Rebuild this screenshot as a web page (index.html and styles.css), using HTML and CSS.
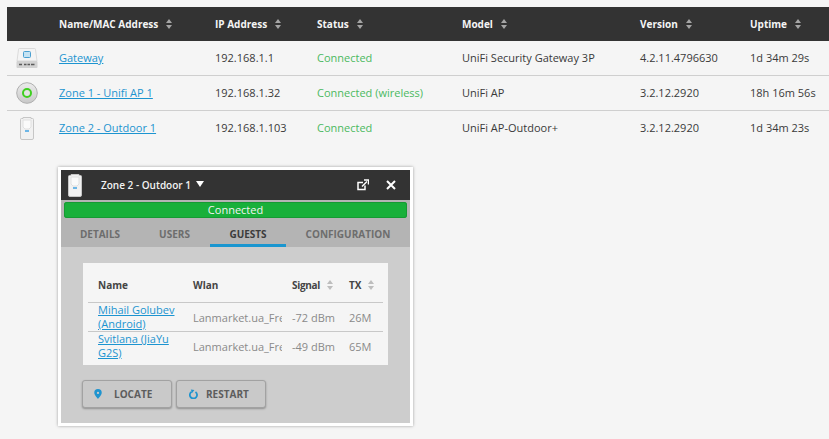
FILE: index.html
```html
<!DOCTYPE html>
<html lang="en">
<head>
<meta charset="utf-8">
<title>Devices</title>
<link rel="stylesheet" href="styles.css">
</head>
<body>
<svg class="defs" width="0" height="0" aria-hidden="true">
  <symbol id="sort" viewBox="0 0 6 10"><path d="M3 0L6 4H0zM3 10L0 6h6z"/></symbol>
  <symbol id="outdoor" viewBox="0 0 14 23">
    <path d="M3 .5h8v1h1.500a1 1 0 0 1 1 1V21a1.500 1.500 0 0 1-1.500 1.500H2A1.500 1.500 0 0 1 .5 21V2.500a1 1 0 0 1 1-1H3z" fill="#f1f1f1" stroke="#c6c6c6"/>
    <path d="M3 3h8v7L9 12H5L3 10z" fill="#fafafa" stroke="#e0e0e0"/>
    <rect x="5" y="13" width="4" height="2" fill="#6db6e6"/>
  </symbol>
</svg>
<main class="page">
  <table class="devices">
    <thead>
      <tr>
        <th class="c-icon"></th>
        <th class="c-name">Name/MAC Address<svg class="sort"><use href="#sort"/></svg></th>
        <th class="c-ip">IP Address<svg class="sort"><use href="#sort"/></svg></th>
        <th class="c-status">Status<svg class="sort"><use href="#sort"/></svg></th>
        <th class="c-model">Model<svg class="sort"><use href="#sort"/></svg></th>
        <th class="c-version">Version<svg class="sort"><use href="#sort"/></svg></th>
        <th class="c-uptime">Uptime<svg class="sort"><use href="#sort"/></svg></th>
      </tr>
    </thead>
    <tbody>
      <tr>
        <td class="icon-cell">
          <svg class="dev-icon" width="22" height="22" viewBox="0 0 22 22">
            <path d="M3.500 1.500h15a1 1 0 0 1 1 1L21 14H1L2.500 2.500a1 1 0 0 1 1-1z" fill="#f4f4f4" stroke="#d4d4d4" stroke-width=".8"/>
            <rect x="7.500" y="4.500" width="7" height="6" rx="1" fill="#c5e3f3" stroke="#4a9fd0"/>
            <rect x=".5" y="14" width="21" height="7" rx="1" fill="#d2d2d2"/>
            <path d="M3 17.500h3M8 17.500h2.500M11.500 17.500h2.500M15 17.500h3.500" stroke="#5a5a5a" stroke-width="1.400"/>
          </svg>
        </td>
        <td><a href="#">Gateway</a></td>
        <td>192.168.1.1</td>
        <td class="ok">Connected</td>
        <td>UniFi Security Gateway 3P</td>
        <td>4.2.11.4796630</td>
        <td>1d 34m 29s</td>
      </tr>
      <tr>
        <td class="icon-cell">
          <svg class="dev-icon" width="22" height="22" viewBox="0 0 22 22">
            <defs><linearGradient id="disc" x1="0" y1="0" x2="0" y2="1"><stop offset="0" stop-color="#ececec"/><stop offset="1" stop-color="#c8c8c8"/></linearGradient></defs>
            <circle cx="11" cy="11" r="10.300" fill="url(#disc)" stroke="#b0b0b0"/>
            <circle cx="11" cy="11" r="4" fill="#e4e4e4" stroke="#3fcf20" stroke-width="2"/>
          </svg>
        </td>
        <td><a href="#">Zone 1 - Unifi AP 1</a></td>
        <td>192.168.1.32</td>
        <td class="ok">Connected (wireless)</td>
        <td>UniFi AP</td>
        <td>3.2.12.2920</td>
        <td>18h 16m 56s</td>
      </tr>
      <tr>
        <td class="icon-cell"><svg class="dev-icon" width="14" height="23"><use href="#outdoor"/></svg></td>
        <td><a href="#">Zone 2 - Outdoor 1</a></td>
        <td>192.168.1.103</td>
        <td class="ok">Connected</td>
        <td>UniFi AP-Outdoor+</td>
        <td>3.2.12.2920</td>
        <td>1d 34m 23s</td>
      </tr>
    </tbody>
  </table>

  <section class="panel">
    <header class="panel-head">
      <svg class="panel-thumb" width="14" height="23"><use href="#outdoor"/></svg>
      <span class="panel-title">Zone 2 - Outdoor 1</span>
      <svg class="caret" width="8" height="6" viewBox="0 0 8 6"><path d="M0 0h8L4 6z" fill="#fff"/></svg>
      <svg class="popout" width="12" height="12" viewBox="0 0 12 12"><path d="M6 3.500H1v7h7V6.500" fill="none" stroke="#fff" stroke-width="1.500"/><path d="M5 7.500L10 2.500M7 1h4.500v4.500" fill="none" stroke="#fff" stroke-width="1.500"/></svg>
      <svg class="close" width="10" height="10" viewBox="0 0 10 10"><path d="M1 1l8 8M9 1L1 9" stroke="#fff" stroke-width="2"/></svg>
    </header>
    <div class="state-wrap"><div class="state">Connected</div></div>
    <nav class="tabs">
      <span class="tab t-details">DETAILS</span>
      <span class="tab t-users">USERS</span>
      <span class="tab t-guests active">GUESTS</span>
      <span class="tab t-config">CONFIGURATION</span>
    </nav>
    <div class="panel-body">
      <div class="card">
        <table class="guests">
          <thead>
            <tr>
              <th class="g-name">Name</th>
              <th class="g-wlan">Wlan</th>
              <th class="g-signal">Signal<svg class="sort"><use href="#sort"/></svg></th>
              <th class="g-tx">TX<svg class="sort"><use href="#sort"/></svg></th>
            </tr>
          </thead>
          <tbody>
            <tr>
              <td><a href="#">Mihail Golubev (Android)</a></td>
              <td class="clip">Lanmarket.ua_Free</td>
              <td class="num">-72 dBm</td>
              <td class="num">26M</td>
            </tr>
            <tr>
              <td><a href="#">Svitlana (JiaYu G2S)</a></td>
              <td class="clip">Lanmarket.ua_Free</td>
              <td class="num">-49 dBm</td>
              <td class="num">65M</td>
            </tr>
          </tbody>
        </table>
      </div>
      <div class="actions">
        <button class="btn btn-locate" type="button">
          <svg width="8" height="10" viewBox="0 0 9 11"><path fill-rule="evenodd" d="M4.500 0A4.200 4.200 0 0 1 8.700 4.200C8.700 7 4.500 11 4.500 11S.3 7 .3 4.200A4.200 4.200 0 0 1 4.500 0zm0 3a1.300 1.300 0 1 0 0 2.600 1.300 1.300 0 0 0 0-2.600z" fill="#1f94cf"/></svg>
          <span>LOCATE</span>
        </button>
        <button class="btn btn-restart" type="button">
          <svg width="9" height="10" viewBox="0 0 10 11"><path d="M3 3A4 4 0 1 0 7.200 3.200" fill="none" stroke="#1f94cf" stroke-width="2"/><path d="M2 .5L6 1 3.500 4.500z" fill="#1f94cf"/></svg>
          <span>RESTART</span>
        </button>
      </div>
    </div>
  </section>
</main>
</body>
</html>
```
FILE: styles.css
```css
* { box-sizing: border-box; }
html, body { margin: 0; padding: 0; }
body {
  width: 829px;
  height: 439px;
  overflow: hidden;
  background: #f5f5f5;
  color: #3a3a3a;
  font-family: "Open Sans", "Liberation Sans", sans-serif;
  font-size: 11px;
}
.defs { position: absolute; }
.page { padding: 7px 0 0 7px; }
a { color: #1c94d0; text-decoration: underline; }

.devices {
  width: 822px;
  table-layout: fixed;
  border-collapse: separate;
  border-spacing: 0;
}
.devices th {
  height: 34px;
  padding: 0;
  background: #333;
  color: #f5f5f5;
  font-size: 10px;
  font-weight: 700;
  text-align: left;
  white-space: nowrap;
}
.c-icon { width: 52px; }
.c-name { width: 156px; }
.c-ip { width: 102px; }
.c-status { width: 145px; }
.c-model { width: 178px; }
.c-version { width: 110px; }
.sort {
  width: 6px;
  height: 10px;
  margin-left: 8px;
  vertical-align: -1px;
  fill: #a5a5a5;
}
.devices td {
  height: 35px;
  padding: 0 0 1px;
  white-space: nowrap;
  border-bottom: 1px solid #cfcfcf;
}
.devices tbody tr:last-child td { border-bottom-color: transparent; }
.devices .icon-cell { padding: 0 12px 0 0; text-align: center; }
.dev-icon { display: block; margin: 0 auto; }
.ok { color: #4bb95f; }

.panel {
  width: 355px;
  margin: 21px 0 0 51px;
  border: 3px solid #fff;
  box-shadow: 0 0 3px rgba(0, 0, 0, .35);
  background: #cdcdcd;
}
.panel-head {
  display: flex;
  align-items: center;
  height: 30px;
  padding: 0 14px 0 7px;
  background: #333;
  color: #f2f2f2;
}
.panel-thumb { flex: none; }
.panel-title { margin-left: 19px; font-size: 10px; font-weight: 600; }
.caret { margin: 0 0 2px 5px; }
.popout { margin-left: auto; }
.close { margin-left: 17px; }
.state-wrap { padding: 2px 3px 0; background: #b4b4b4; }
.state {
  height: 16px;
  border-radius: 3px;
  background: #18b03a;
  box-shadow: inset 0 0 0 1px #159a33;
  color: #f4f4f4;
  font-size: 11px;
  line-height: 16px;
  text-align: center;
}
.tabs {
  display: flex;
  height: 29px;
  background: #b4b4b4;
}
.tab {
  display: block;
  height: 29px;
  padding-top: 9px;
  color: #6d6d6d;
  font-size: 10px;
  font-weight: 700;
  text-align: center;
  white-space: nowrap;
}
.t-details { width: 78px; }
.t-users { width: 71px; }
.t-guests { width: 76px; }
.t-config { width: 124px; }
.tab.active { color: #3c3c3c; border-bottom: 3px solid #1a96d0; }

.panel-body { padding: 16px 0 15px 21px; height: 176px; }
.card {
  width: 305px;
  height: 102px;
  margin-left: 1px;
  padding: 5px;
  background: #f5f5f5;
}
.guests {
  width: 295px;
  table-layout: fixed;
  border-collapse: separate;
  border-spacing: 0;
}
.guests th {
  height: 35px;
  padding: 0 0 0 10px;
  color: #444;
  font-size: 10px;
  font-weight: 700;
  text-align: left;
  white-space: nowrap;
  border-bottom: 1px solid #c8c8c8;
}
.g-name { width: 95px; }
.g-wlan { width: 99px; }
.g-signal { width: 57px; }
.g-tx { width: 44px; }
.guests .g-signal { letter-spacing: -.3px; }
.guests .sort { margin-left: 7px; fill: #bdbdbd; }
.guests td {
  height: 29px;
  padding: 0 0 0 10px;
  color: #8a8a8a;
  font-size: 11px;
  line-height: 14px;
  border-bottom: 1px solid #c8c8c8;
}
.guests tbody tr:last-child td { border-bottom-color: transparent; }
.guests .clip, .guests .num { padding-top: 1px; }
.clip { overflow: hidden; white-space: nowrap; }

.actions { display: flex; gap: 4px; margin-top: 15px; }
.btn {
  display: flex;
  align-items: center;
  width: 90px;
  height: 28px;
  margin: 0;
  padding: 0 0 0 11px;
  border: 1px solid #a2a2a2;
  border-radius: 3px;
  background: #c9c9c9;
  box-shadow: 0 1px 2px rgba(0, 0, 0, .3);
  color: #5d5d5d;
  font-family: inherit;
  font-size: 10px;
  font-weight: 700;
}
.btn svg { flex: none; }
.btn span { margin-left: 12px; }
.btn-restart { padding-left: 12px; }
.btn-restart span { margin-left: 8px; }
```
